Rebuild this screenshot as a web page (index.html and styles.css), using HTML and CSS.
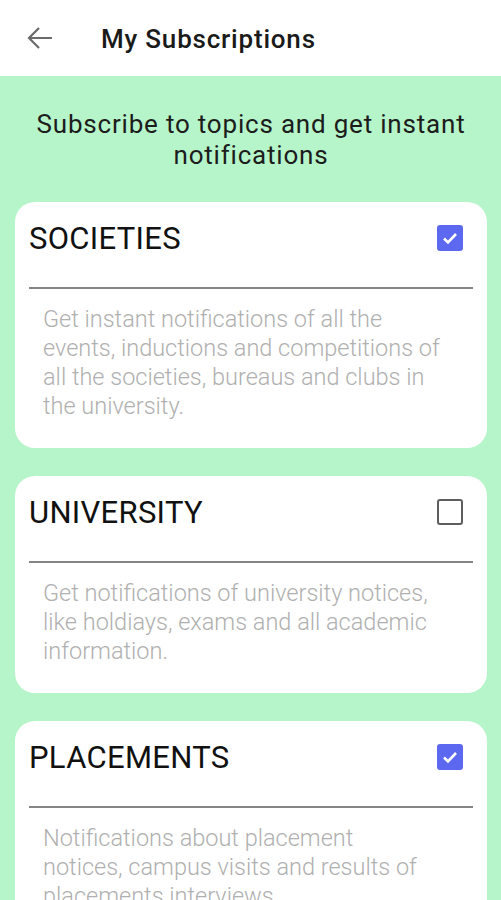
FILE: index.html
```html
<!DOCTYPE html>
<html lang="en">
<head>
  <meta charset="UTF-8" />
  <meta name="viewport" content="width=device-width, initial-scale=1.0"/>
  <title>My Subscriptions</title>
  <link rel="stylesheet" href="styles.css">
</head>
<body>
  <header>
    <button class="back" aria-label="Back">
      <svg width="26" height="24" viewBox="0 0 26 24">
        <path d="M2 12H25M12 2L2 12L12 22" fill="none" stroke="#6b6b6b" stroke-width="2.2"/>
      </svg>
    </button>
    <h1>My Subscriptions</h1>
  </header>

  <main>
    <p class="intro">Subscribe to topics and get instant notifications</p>

    <div class="topic">
      <div class="topic-head">
        <span class="topic-name">SOCIETIES</span>
        <span class="check on">
          <svg width="18" height="18" viewBox="0 0 18 18"><path d="M3 9.5L7 13.5L15 5" fill="none" stroke="#fff" stroke-width="2.6"/></svg>
        </span>
      </div>
      <hr>
      <p class="topic-desc">Get instant notifications of all the events, inductions and competitions of all the societies, bureaus and clubs in the university.</p>
    </div>

    <div class="topic">
      <div class="topic-head">
        <span class="topic-name">UNIVERSITY</span>
        <span class="check"></span>
      </div>
      <hr>
      <p class="topic-desc">Get notifications of university notices, like holdiays, exams and all academic information.</p>
    </div>

    <div class="topic">
      <div class="topic-head">
        <span class="topic-name">PLACEMENTS</span>
        <span class="check on">
          <svg width="18" height="18" viewBox="0 0 18 18"><path d="M3 9.5L7 13.5L15 5" fill="none" stroke="#fff" stroke-width="2.6"/></svg>
        </span>
      </div>
      <hr>
      <p class="topic-desc">Notifications about placement<br>notices, campus visits and results of placements interviews.</p>
    </div>
  </main>
</body>
</html>
```

FILE: styles.css
```css
body {
  margin: 0;
  padding: 0;
  background: #b6f5c9;
  font-family: Roboto, 'Liberation Sans', sans-serif;
  overflow: hidden;
}

header {
  background: #fff;
  height: 76px;
  display: flex;
  align-items: center;
}

.back {
  background: none;
  border: none;
  padding: 0;
  margin: 0 0 0 27px;
  width: 26px;
  height: 24px;
  display: flex;
}

header h1 {
  margin: 2px 0 0 48px;
  font-size: 26px;
  font-weight: 500;
  letter-spacing: 0.8px;
  color: #1a1a1a;
}

main {
  padding: 33px 14px 0 15px;
}

.intro {
  margin: 0 0 31px;
  text-align: center;
  font-size: 26px;
  line-height: 31px;
  letter-spacing: 0.8px;
  color: #1c1c1c;
}

.topic {
  background: #fff;
  border-radius: 20px;
  padding: 12px 14px 27px;
  margin-bottom: 28px;
}

.topic-head {
  height: 48px;
  display: flex;
  align-items: center;
  justify-content: space-between;
}

.topic-name {
  font-size: 31px;
  letter-spacing: 0.3px;
  color: #111;
}

.check {
  width: 22px;
  height: 22px;
  margin-right: 10px;
  border: 2.5px solid #5e5e5e;
  border-radius: 3px;
  display: flex;
  align-items: center;
  justify-content: center;
}

.check.on {
  background: #5c68ef;
  border-color: #5c68ef;
}

hr {
  margin: 25px 0 0;
  border: none;
  height: 2px;
  background: #858585;
}

.topic-desc {
  margin: 16px 0 0;
  padding: 0 20px 0 14px;
  font-size: 23.5px;
  font-weight: 300;
  line-height: 29px;
  color: #b0b0b0;
}
```
